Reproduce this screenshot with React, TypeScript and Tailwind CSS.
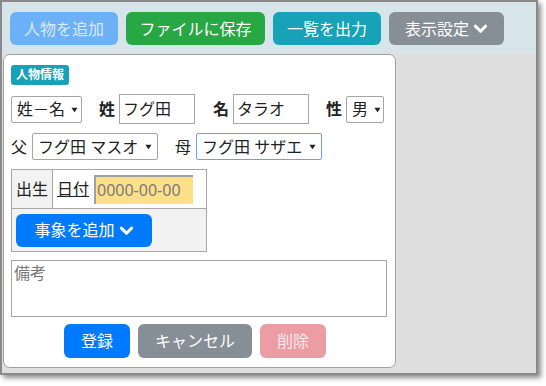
import React from "react";

const font = { fontFamily: '"Noto Sans", "Noto Sans CJK JP", sans-serif' };

const Chevron = ({ className = "" }: { className?: string }) => (
  <svg viewBox="0 0 16 16" width="15" height="15" className={className}>
    <path d="M2.5 5.5 L8 11 L13.5 5.5" fill="none" stroke="currentColor" strokeWidth="3.2" strokeLinecap="round" strokeLinejoin="round" />
  </svg>
);

const Caret = () => (
  <svg viewBox="0 0 8 8" width="7" height="7" className="ml-1.5 shrink-0">
    <path d="M0.5 2 L7.5 2 L4 7 Z" fill="#222" />
  </svg>
);

// 擬似セレクト
const FakeSelect = ({ value, focused = false, className = "" }: { value: string; focused?: boolean; className?: string }) => (
  <div
    className={`flex items-center h-[27px] px-[5px] rounded-[2px] border bg-white text-[16px] leading-none text-[#222] ${
      focused ? "border-[#6f9ef0]" : "border-[#a6a6a6]"
    } ${className}`}
  >
    <span className="whitespace-nowrap">{value}</span>
    <Caret />
  </div>
);

const TextBox = ({ value, className = "" }: { value: string; className?: string }) => (
  <div className={`flex items-center h-[30px] px-[3px] border border-[#a6a6a6] bg-white text-[16px] leading-none text-[#222] ${className}`}>
    {value}
  </div>
);

export default function App() {
  return (
    <div className="w-[546px] h-[386px] bg-white" style={font}>
      <div className="w-[538px] h-[375px] border-2 border-[#8a8a8a] shadow-[3px_3px_5px_rgba(0,0,0,0.45)] flex flex-col bg-[#dfdfdf]">
        {/* ツールバー */}
        <div className="h-[51px] bg-[#d7e4e9] flex items-start gap-[8px] pl-[8px] pt-[10px]">
          <button className="h-[33px] w-[108px] rounded-[6px] bg-[#6cb0f5] text-[#d9e9fb] text-[16px]">人物を追加</button>
          <button className="h-[33px] w-[139px] rounded-[6px] bg-[#28a745] text-white text-[16px]">ファイルに保存</button>
          <button className="h-[33px] w-[108px] rounded-[6px] bg-[#17a2b8] text-white text-[16px]">一覧を出力</button>
          <button className="h-[33px] w-[115px] rounded-[6px] bg-[#868e96] text-white text-[16px] flex items-center justify-center gap-1">
            表示設定
            <Chevron />
          </button>
        </div>

        {/* 人物パネル */}
        <div className="ml-[1px] mt-[1px] w-[393px] h-[314px] bg-white border border-[#a0a0a0] rounded-[7px] pl-[7px] pr-[9px] pt-[10px] flex flex-col">
          <div className="self-start h-[20px] px-[5px] rounded-[3px] bg-[#17a2b8] text-white text-[12px] font-bold flex items-center">
            人物情報
          </div>

          <div className="flex items-center mt-[9px] text-[16px] text-[#222]">
            <FakeSelect value="姓－名" className="w-[71px]" />
            <span className="font-bold ml-[17px] mr-[4px]">姓</span>
            <TextBox value="フグ田" className="w-[76px]" />
            <span className="font-bold ml-[18px] mr-[4px]">名</span>
            <TextBox value="タラオ" className="w-[76px]" />
            <span className="font-bold ml-[17px] mr-[4px]">性</span>
            <FakeSelect value="男" className="w-[38px]" />
          </div>

          <div className="flex items-center mt-[9px] text-[16px] text-[#222]">
            <span className="mr-[5px]">父</span>
            <FakeSelect value="フグ田 マスオ" className="w-[126px] h-[26px] justify-between" />
            <span className="ml-[17px] mr-[5px]">母</span>
            <FakeSelect value="フグ田 サザエ" focused className="w-[126px] h-[26px] justify-between" />
          </div>

          <table className="mt-[9px] w-[196px] border-collapse text-[16px] text-[#222]">
            <tbody>
              <tr className="h-[39px]">
                <td className="w-[41px] border border-[#a6a6a6] bg-[#f2f2f2] px-[4px]">出生</td>
                <td className="border border-[#a6a6a6] px-[4px]">
                  <div className="flex items-center">
                    <span className="underline mr-[5px]">日付</span>
                    <div className="h-[29px] w-[99px] bg-[#ffe08a] border-t-2 border-l-2 border-[#a0a0a0] flex items-center px-[1px] text-[#7a7a7a] leading-none">
                      0000-00-00
                    </div>
                  </div>
                </td>
              </tr>
              <tr className="h-[43px]">
                <td colSpan={2} className="border border-[#a6a6a6] bg-[#f2f2f2] px-[4px]">
                  <button className="h-[33px] w-[136px] rounded-[6px] bg-[#007bff] text-white text-[16px] flex items-center justify-center gap-1">
                    事象を追加
                    <Chevron />
                  </button>
                </td>
              </tr>
            </tbody>
          </table>

          <div className="mt-[8px] h-[57px] w-[376px] border border-[#a6a6a6] px-[2px] text-[16px] text-[#777] leading-[24px]">
            備考
          </div>

          <div className="flex justify-center gap-[8px] mt-[7px] pr-[7px]">
            <button className="h-[34px] w-[66px] rounded-[6px] bg-[#007bff] text-white text-[16px]">登録</button>
            <button className="h-[34px] w-[114px] rounded-[6px] bg-[#868e96] text-white text-[16px]">キャンセル</button>
            <button className="h-[34px] w-[66px] rounded-[6px] bg-[#ec9ca3] text-[#fbeaec] text-[16px]">削除</button>
          </div>
        </div>
      </div>
    </div>
  );
}
